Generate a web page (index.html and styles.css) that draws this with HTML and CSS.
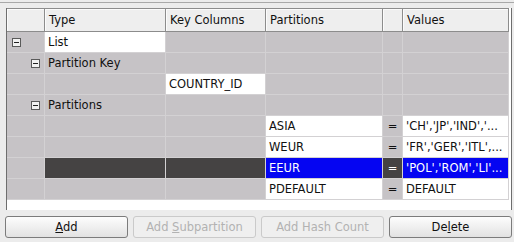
FILE: index.html
```html
<!doctype html>
<html lang='en-US'>
<head>
  <title>Partitions</title>
  <meta charset='utf-8'>
  <link rel="stylesheet" href="styles.css">
</head>
<body>
  <div class='topline'></div>
  <div class='pane'>
    <div class='grid head'>
      <div></div><div>Type</div><div>Key Columns</div><div>Partitions</div><div></div><div>Values</div>
    </div>
    <div class='grid rows'>
      <div class='tree'><span class='toggle'></span></div><div class='w'>List</div><div></div><div></div><div></div><div></div>
      <div class='tree lvl1'><span class='toggle'></span></div><div>Partition Key</div><div></div><div></div><div></div><div></div>
      <div></div><div></div><div class='w'>COUNTRY_ID</div><div></div><div></div><div></div>
      <div class='tree lvl1'><span class='toggle'></span></div><div>Partitions</div><div></div><div></div><div></div><div></div>
      <div></div><div></div><div></div><div class='w'>ASIA</div><div class='eq'>=</div><div class='w'>'CH','JP','IND','...</div>
      <div></div><div></div><div></div><div class='w'>WEUR</div><div class='eq'>=</div><div class='w'>'FR','GER','ITL',...</div>
      <div></div><div class='d'></div><div class='d'></div><div class='s'>EEUR</div><div class='eq d'>=</div><div class='s'>'POL','ROM','LI'...</div>
      <div></div><div></div><div></div><div class='w'>PDEFAULT</div><div class='eq'>=</div><div class='w'>DEFAULT</div>
    </div>
  </div>
  <div class='buttons'>
    <button><u>A</u>dd</button>
    <button disabled>Add <u>S</u>ubpartition</button>
    <button disabled>Add Hash Count</button>
    <button>De<u>l</u>ete</button>
  </div>
</body>
</html>
```

FILE: styles.css
```css
*, html { box-sizing: border-box; }
body    { margin: 0; background: #ececec; color: #111; font: 11.5px "DejaVu Sans", sans-serif; }

.topline { height: 3px; border-bottom: 1px solid #a8a8a8; }
.pane {
  margin: 5px 0 0 6px; width: 506px; height: 202px; background: #fff;
  border-left: 1px solid #6e6e6e; border-right: 1px solid #6e6e6e;
}

.grid { display: grid; grid-template-columns: 37px 120px 99px 116px 19px 105px; column-gap: 1px; width: 502px; }
.grid > div { white-space: nowrap; overflow: hidden; }

.head { background: #8c8c8c; border: 1px solid #8c8c8c; border-left: 0; }
.head > div { background: #eeeeee; height: 22px; line-height: 22px; padding-left: 4px; box-shadow: inset 1px 1px #fbfbfb; }

.rows { background: #d3d1d3; row-gap: 1px; border-bottom: 1px solid #d3d1d3; border-right: 1px solid #d3d1d3; }
.rows > div { background: #c6c3c6; height: 20px; line-height: 20px; padding-left: 3px; }
.rows > .w { background: #fff; }
.rows > .d { background: #454343; color: #fff; }
.rows > .s { background: #0505f2; color: #fff; }
.rows > .eq { padding: 0; text-align: center; }

.tree { display: flex; align-items: center; }
.rows > .tree { padding-left: 5px; }
.rows > .lvl1 { padding-left: 24px; }
.toggle { width: 9px; height: 9px; border: 1px solid #5a5a5a; background: #f2f2f2; display: flex; align-items: center; justify-content: center; }
.toggle::before { content: ''; width: 5px; height: 1px; background: #222; }

.buttons { display: flex; gap: 5px; padding-left: 5px; margin-top: 6px; }
button {
  width: 123px; height: 22px; padding: 0; border: 1px solid #7c7c7c; border-radius: 3px;
  background: linear-gradient(#fdfdfd, #e2e2e2); color: #111; font: 11.5px "DejaVu Sans", sans-serif;
}
button:disabled { border-color: #cacaca; background: #efefef; color: #b2b2b2; }
```
